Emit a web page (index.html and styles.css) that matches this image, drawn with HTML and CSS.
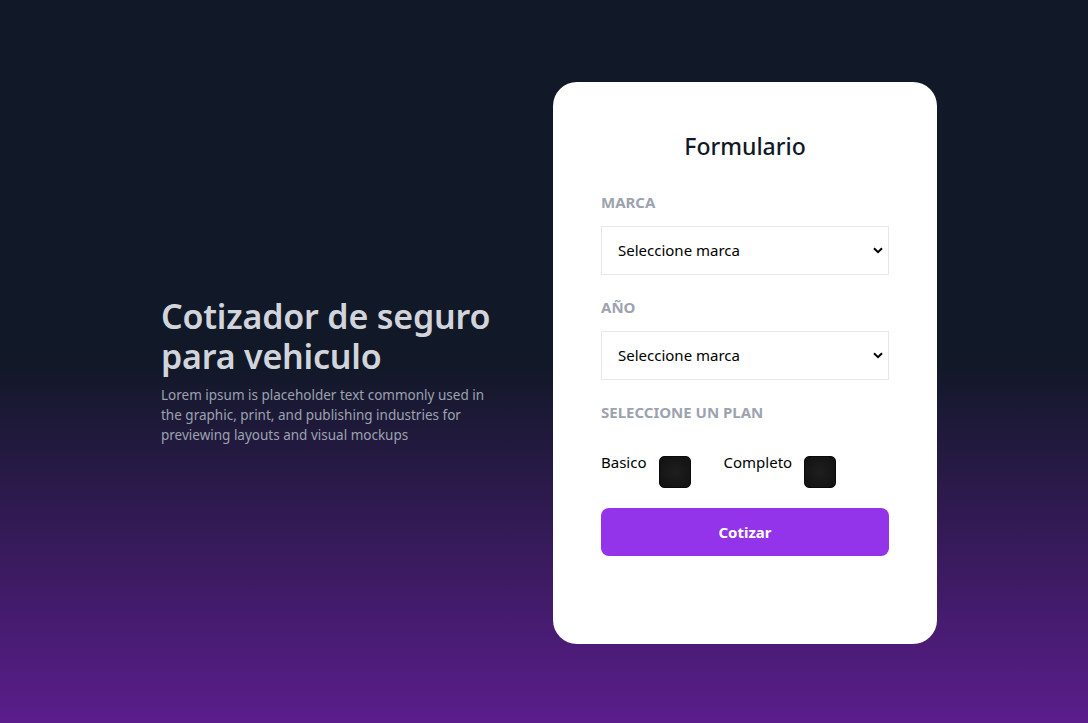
FILE: index.html
```html
<!DOCTYPE html>
<html lang="es">
<head>
<meta charset="utf-8">
<title>Cotizador</title>
<link rel="stylesheet" href="styles.css">
</head>
<body>
<main class="page">
  <section class="intro">
    <h1 class="intro-title">Cotizador de seguro para vehiculo</h1>
    <p class="intro-text">Lorem ipsum is placeholder text commonly used in the graphic, print, and publishing industries for previewing layouts and visual mockups</p>
  </section>
  <form class="card">
    <h2 class="card-title">Formulario</h2>
    <label class="field-label">Marca</label>
    <div class="select-wrap">
      <select class="select"><option>Seleccione marca</option></select>
      <svg class="chevron" width="10" height="7" viewBox="0 0 10 7"><path d="M1 1.2 L5 5.2 L9 1.2" fill="none" stroke="#000" stroke-width="2"/></svg>
    </div>
    <label class="field-label">Año</label>
    <div class="select-wrap">
      <select class="select"><option>Seleccione marca</option></select>
      <svg class="chevron" width="10" height="7" viewBox="0 0 10 7"><path d="M1 1.2 L5 5.2 L9 1.2" fill="none" stroke="#000" stroke-width="2"/></svg>
    </div>
    <label class="field-label">Seleccione un plan</label>
    <div class="plans">
      <label class="plan">Basico <input class="plan-box" type="radio" name="plan"></label>
      <label class="plan">Completo <input class="plan-box" type="radio" name="plan"></label>
    </div>
    <button class="submit" type="button">Cotizar</button>
  </form>
</main>
</body>
</html>
```
FILE: styles.css
```css
* { box-sizing: border-box; }
html, body { margin: 0; padding: 0; }
body {
  font-family: "Noto Sans", "Open Sans", sans-serif;
  background: linear-gradient(to bottom, #111827 0%, #111827 50%, #5b1d8c 100%);
  min-height: 723px;
}
.page {
  height: 723px;
  display: flex;
  align-items: center;
  justify-content: center;
  padding-left: 10px;
  gap: 44px;
}
.intro {
  width: 348px;
  margin-top: 18px;
}
.intro-title {
  margin: 0;
  font-size: 34px;
  line-height: 40px;
  font-weight: 600;
  color: #d1d5db;
  letter-spacing: -0.2px;
}
.intro-text {
  margin: 9px 0 0;
  max-width: 328px;
  font-size: 13.5px;
  line-height: 20px;
  color: #9ca3af;
}
.card {
  width: 384px;
  height: 562px;
  margin-top: 2px;
  background: #fff;
  border-radius: 24px;
  padding: 48px;
  display: flex;
  flex-direction: column;
}
.card-title {
  margin: 0 0 28px;
  text-align: center;
  font-size: 23px;
  line-height: 32px;
  font-weight: 500;
  color: #111827;
}
.field-label {
  display: block;
  font-size: 15px;
  line-height: 24px;
  font-weight: 700;
  text-transform: uppercase;
  color: #9ca3af;
  margin-bottom: 12px;
}
.select-wrap {
  position: relative;
  margin-bottom: 20px;
}
.select {
  appearance: none;
  -webkit-appearance: none;
  width: 100%;
  height: 49px;
  border: 1px solid #e5e7eb;
  border-radius: 0;
  background: #fff;
  padding: 0 16px;
  font-family: inherit;
  font-size: 15px;
  color: #000;
}
.chevron {
  position: absolute;
  right: 6px;
  top: 21px;
  pointer-events: none;
}
.plans {
  display: flex;
  gap: 33px;
  margin-top: 14px;
  margin-bottom: 20px;
}
.plan {
  display: flex;
  align-items: flex-start;
  gap: 12px;
  font-size: 15px;
  line-height: 24px;
  color: #000;
}
.plan-box {
  appearance: none;
  -webkit-appearance: none;
  margin: 6px 0 0;
  width: 32px;
  height: 32px;
  border-radius: 5px;
  background: radial-gradient(circle, #1e1e1e 0%, #111 100%);
  border: 1px solid #0a0a0a;
}
.submit {
  height: 48px;
  border: none;
  border-radius: 8px;
  background: #9333ea;
  color: #fff;
  font-family: inherit;
  font-size: 15px;
  font-weight: 700;
}
```
